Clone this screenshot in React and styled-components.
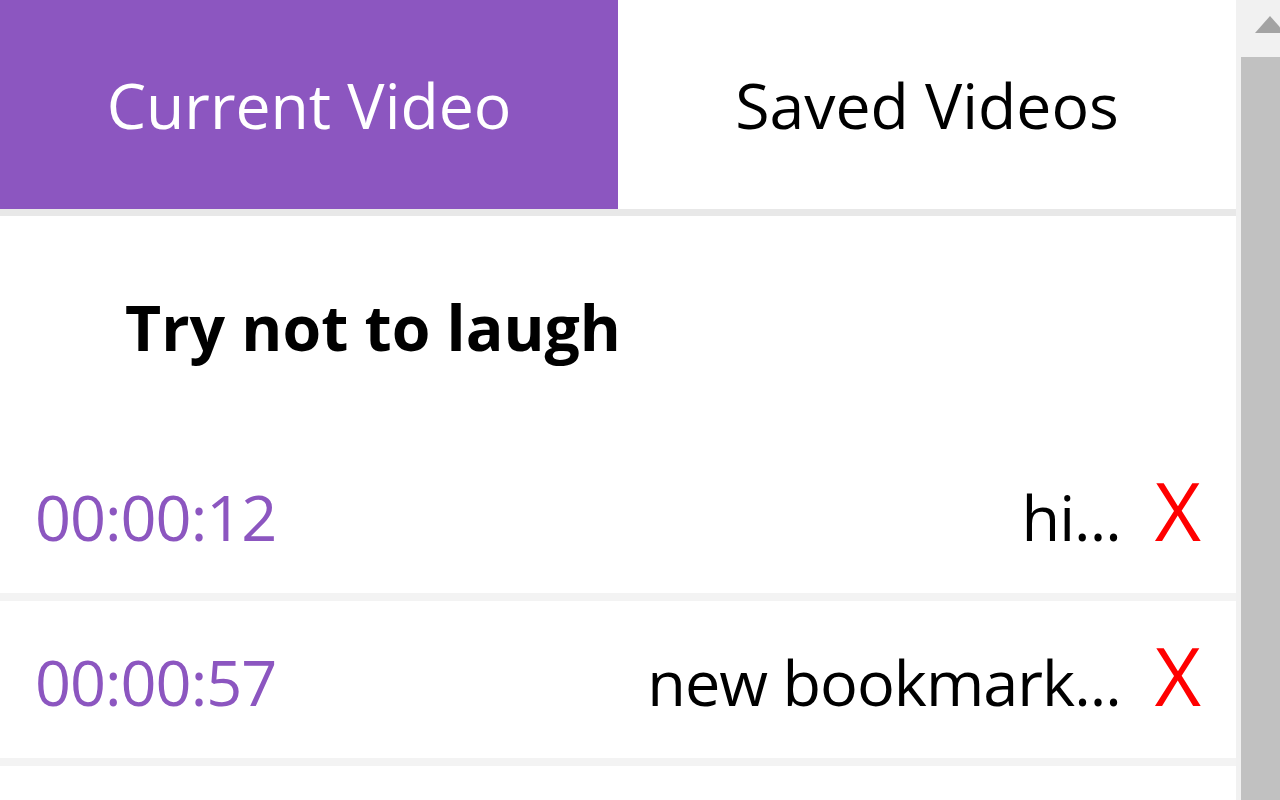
import React from "react";
import styled, { createGlobalStyle } from "styled-components";

const purple = "#8c56c0";

const GlobalStyle = createGlobalStyle`
  html, body {
    margin: 0;
    padding: 0;
    background: #fff;
  }
  body {
    font-family: "Open Sans", "Noto Sans", "Liberation Sans", sans-serif;
  }
`;

const Frame = styled.div`
  display: flex;
  height: 800px;
  overflow: hidden;
`;

const Popup = styled.div`
  flex: 1;
  background: #fff;
`;

const TabBar = styled.div`
  display: grid;
  grid-template-columns: 1fr 1fr;
  height: 209px;
  border-bottom: 7px solid #e8e8e8;
`;

const Tab = styled.div`
  display: flex;
  align-items: center;
  justify-content: center;
  font-size: 62.5px;
  background: ${(p) => (p.active ? purple : "#fff")};
  color: ${(p) => (p.active ? "#fff" : "#000")};
  cursor: pointer;
`;

const VideoTitle = styled.h2`
  margin: 0;
  height: 220px;
  box-sizing: border-box;
  padding: 73px 0 0 125px;
  font-size: 62.5px;
  font-weight: 700;
  line-height: 1.2;
`;

const Row = styled.div`
  display: flex;
  align-items: center;
  height: 165px;
  padding: 4px 35px 0 35px;
  box-sizing: border-box;
  border-bottom: 8px solid #f3f3f3;
  font-size: 63px;
  letter-spacing: -1px;
`;

const Time = styled.span`
  color: ${purple};
`;

const Desc = styled.span`
  margin-left: auto;
  color: #000;
`;

const Delete = styled.span`
  color: #ff0000;
  font-size: 80px;
  margin: 0 0 14px 34px;
  line-height: 1;
  letter-spacing: 0;
  cursor: pointer;
`;

const ScrollBar = styled.div`
  width: 44px;
  background: #f1f1f1;
  display: flex;
  flex-direction: column;
`;

const ScrollButton = styled.div`
  height: 57px;
  display: flex;
  justify-content: flex-end;
  padding-top: 16px;
  box-sizing: border-box;
`;

const Arrow = styled.div`
  width: 0;
  height: 0;
  border-left: 15px solid transparent;
  border-right: 15px solid transparent;
  border-bottom: 17px solid #a3a3a3;
  margin-right: -5px;
`;

const Thumb = styled.div`
  flex: 1;
  margin-left: 5px;
  background: #c1c1c1;
`;

const bookmarks = [
  { time: "00:00:12", desc: "hi..." },
  { time: "00:00:57", desc: "new bookmark..." },
  { time: "00:01:34", desc: "" },
];

export default function App() {
  return (
    <>
      <GlobalStyle />
      <Frame>
        <Popup>
          <TabBar>
            <Tab active>Current Video</Tab>
            <Tab>Saved Videos</Tab>
          </TabBar>
          <VideoTitle>Try not to laugh</VideoTitle>
          {bookmarks.map((b, i) => (
            <Row key={i}>
              {b.desc && (
                <>
                  <Time>{b.time}</Time>
                  <Desc>{b.desc}</Desc>
                  <Delete>X</Delete>
                </>
              )}
            </Row>
          ))}
        </Popup>
        <ScrollBar>
          <ScrollButton>
            <Arrow />
          </ScrollButton>
          <Thumb />
        </ScrollBar>
      </Frame>
    </>
  );
}
